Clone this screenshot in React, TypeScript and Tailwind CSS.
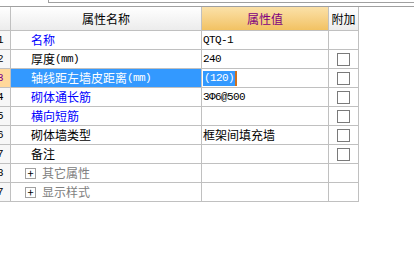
import React from 'react';

type Row = {
  no: string;
  name: React.ReactNode;
  value?: React.ReactNode;
  tone: 'blue' | 'black' | 'gray';
  check: boolean;
  selected?: boolean;
  group?: boolean;
};

const mono = "font-['Liberation_Mono'] text-[11px] tracking-[-0.6px]";

const rows: Row[] = [
  { no: '1', name: '名称', value: <span className={mono}>QTQ-1</span>, tone: 'blue', check: false },
  { no: '2', name: <>厚度<span className={mono}>(mm)</span></>, value: <span className={mono}>240</span>, tone: 'black', check: true },
  {
    no: '3',
    name: <>轴线距左墙皮距离<span className={mono}>(mm)</span></>,
    value: (
      <span className="flex items-center">
        <span className={`${mono} bg-[#3399ff] text-white leading-[15px] px-px`}>(120)</span>
        <span className="w-[2px] h-[15px] bg-[#d0701c]" />
      </span>
    ),
    tone: 'black',
    check: true,
    selected: true,
  },
  { no: '4', name: '砌体通长筋', value: <span className={mono}>3Φ6@500</span>, tone: 'blue', check: true },
  { no: '5', name: '横向短筋', tone: 'blue', check: true },
  { no: '6', name: '砌体墙类型', value: '框架间填充墙', tone: 'black', check: true },
  { no: '7', name: '备注', tone: 'black', check: true },
  { no: '8', name: '其它属性', tone: 'gray', check: false, group: true },
  { no: '17', name: '显示样式', tone: 'gray', check: false, group: true },
];

const toneClass = {
  blue: 'text-[#0000ff]',
  black: 'text-black',
  gray: 'text-[#808080]',
};

export default function App() {
  return (
    <div className="w-[414px] h-[257px] bg-white overflow-hidden font-['Noto_Sans_CJK_SC',sans-serif] text-[12px] text-black">
      {/* frame of the panel above */}
      <div className="ml-[48px] h-[3px] border-l border-b border-[#a0a0a0]" />
      <div className="h-[3px]" />
      <div className="h-px bg-[#a0a0a0]" />

      <div className="grid grid-cols-[11px_191px_127px_30px] w-[359px]">
        {/* header */}
        <div className="h-[24px] border-r border-b border-[#c0c0c0] bg-gradient-to-b from-white to-[#ececec]" />
        <div className="h-[24px] border-r border-b border-[#c0c0c0] bg-gradient-to-b from-white to-[#ececec] flex items-center justify-center">
          属性名称
        </div>
        <div className="h-[24px] border-r border-b border-[#c0c0c0] bg-gradient-to-b from-[#fbe1a8] to-[#f2c262] flex items-center justify-center text-[#800080]">
          属性值
        </div>
        <div className="h-[24px] border-r border-b border-[#c0c0c0] bg-gradient-to-b from-white to-[#ececec] flex items-center justify-center">
          附加
        </div>

        {rows.map((r) => (
          <React.Fragment key={r.no}>
            <div
              className={`h-[19px] border-r border-b border-[#c0c0c0] overflow-hidden flex items-center justify-end pr-[7px] ${mono} ${
                r.selected ? 'bg-[#ffd89b] text-[#80008c]' : 'bg-[#f7f7f7] text-black'
              }`}
            >
              <span className="whitespace-nowrap">{r.no}</span>
            </div>
            <div
              className={`h-[19px] border-r border-b border-[#c0c0c0] flex items-center whitespace-nowrap ${
                r.selected ? 'bg-[#3399ff] text-white' : toneClass[r.tone]
              } ${r.group ? 'pl-[14px]' : 'pl-[20px]'}`}
            >
              {r.group && (
                <span className="w-[11px] h-[11px] border border-[#a0a0a0] mr-[6px] flex items-center justify-center text-black text-[11px] leading-none">
                  +
                </span>
              )}
              {r.name}
            </div>
            <div className="h-[19px] border-r border-b border-[#c0c0c0] flex items-center pl-px whitespace-nowrap">
              {r.value}
            </div>
            <div className="h-[19px] border-r border-b border-[#c0c0c0] flex items-center justify-center">
              {r.check && <span className="w-[13px] h-[13px] border border-[#7a7a7a] bg-white" />}
            </div>
          </React.Fragment>
        ))}
      </div>
    </div>
  );
}
